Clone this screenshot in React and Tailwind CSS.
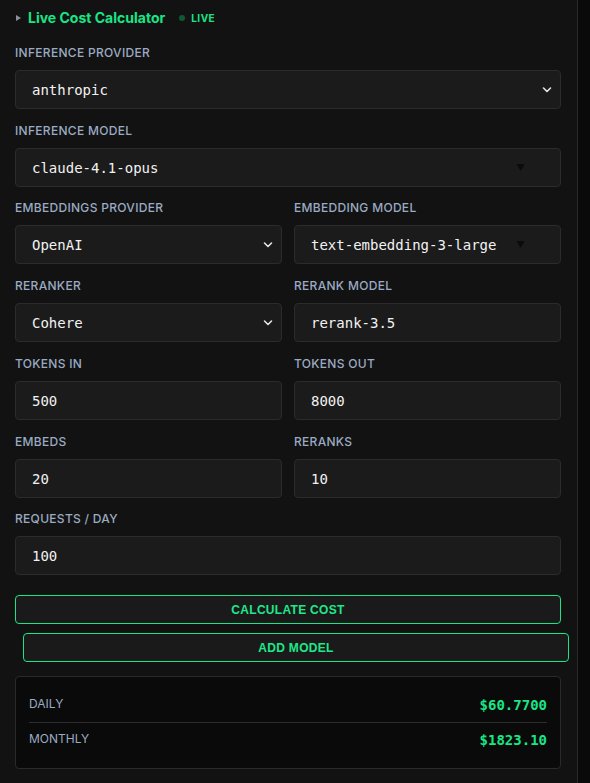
import React from 'react';

const mono = { fontFamily: '"DejaVu Sans Mono", "Liberation Mono", monospace' };

const Label = ({ children }) => (
  <div className="text-xs leading-4 font-medium tracking-wide text-[#9aabc3] uppercase mb-[9px]">
    {children}
  </div>
);

const Chevron = () => (
  <svg className="absolute right-[9px] top-1/2 -translate-y-1/2 pointer-events-none" width="10" height="7" viewBox="0 0 10 7" fill="none">
    <path d="M1.5 1.5L5 5L8.5 1.5" stroke="#e5e5e5" strokeWidth="1.6" strokeLinecap="round" strokeLinejoin="round" />
  </svg>
);

const boxCls =
  'block w-full h-[39px] rounded-[4px] border border-[#2b2b2b] bg-[#1b1b1b] px-4 text-sm text-[#f2f2f2] outline-none appearance-none';

const SelectField = ({ label, value, options }) => (
  <div>
    <Label>{label}</Label>
    <div className="relative">
      <select className={boxCls} style={mono} defaultValue={value}>
        {options.map((o) => (
          <option key={o}>{o}</option>
        ))}
      </select>
      <Chevron />
    </div>
  </div>
);

// text input with a datalist arrow
const ListField = ({ label, value }) => (
  <div>
    <Label>{label}</Label>
    <div className="relative">
      <input className={boxCls} style={mono} defaultValue={value} />
      <span className="absolute right-[36px] top-1/2 -translate-y-1/2 text-[9px] text-[#0b0b0b] pointer-events-none">▼</span>
    </div>
  </div>
);

const InputField = ({ label, value }) => (
  <div>
    <Label>{label}</Label>
    <input className={boxCls} style={mono} defaultValue={value} />
  </div>
);

export default function App() {
  return (
    <div className="min-h-screen flex bg-[#0a0a0a]" style={{ fontFamily: 'Inter, "Noto Sans", sans-serif' }}>
      <div className="w-[578px] min-h-screen border-r border-[#2a2a2a] bg-[#121212] pl-[15px] pr-4 pt-2 pb-4">
        {/* Header */}
        <div className="h-5 flex items-center mb-[17px]">
          <svg width="5" height="6" viewBox="0 0 5 6" className="ml-px mr-[7px]">
            <path d="M0 0L5 3L0 6Z" fill="#8a8f98" />
          </svg>
          <span className="text-sm font-bold text-[#19e586]">Live Cost Calculator</span>
          <span className="ml-[14px] w-[6px] h-[6px] rounded-full bg-[#0f5a35]" />
          <span className="ml-[6px] text-[10px] font-bold tracking-wider text-[#19e586]">LIVE</span>
        </div>

        <div className="flex flex-col">
          <SelectField label="Inference Provider" value="anthropic" options={['anthropic', 'openai', 'google']} />
          <div className="mt-[14px]">
            <ListField label="Inference Model" value="claude-4.1-opus" />
          </div>

          <div className="mt-[13px] grid grid-cols-2 gap-x-3 gap-y-[14px]">
            <SelectField label="Embeddings Provider" value="OpenAI" options={['OpenAI', 'Cohere', 'Voyage']} />
            <ListField label="Embedding Model" value="text-embedding-3-large" />
            <SelectField label="Reranker" value="Cohere" options={['Cohere', 'Jina', 'None']} />
            <InputField label="Rerank Model" value="rerank-3.5" />
            <InputField label="Tokens In" value="500" />
            <InputField label="Tokens Out" value="8000" />
            <InputField label="Embeds" value="20" />
            <InputField label="Reranks" value="10" />
          </div>

          <div className="mt-[13px]">
            <InputField label="Requests / Day" value="100" />
          </div>
        </div>

        <div className="mt-5" style={{ fontFamily: '"Liberation Sans", Arial, sans-serif' }}>
          <button className="block w-full h-[29px] rounded-[4px] border-[1.5px] border-[#19e586] bg-[#1a1a1a] text-xs font-bold tracking-[0.3px] text-[#1ee88a]">
            CALCULATE COST
          </button>
          <button className="block w-full ml-2 mt-[9px] h-[29px] rounded-[4px] border-[1.5px] border-[#19e586] bg-[#1a1a1a] text-xs font-bold tracking-[0.3px] text-[#1ee88a]">
            ADD MODEL
          </button>
        </div>

        <div className="mt-[14px] rounded-[4px] border border-[#2a2a2a] bg-[#0a0a0a] px-[13px] pt-[16px] pb-[18px]">
          <div className="flex items-center justify-between h-[22px] mb-[7px]">
            <span className="text-xs text-[#9aabc3]">DAILY</span>
            <span className="text-sm font-bold text-[#19e586] mt-[2px]" style={mono}>$60.7700</span>
          </div>
          <div className="border-t border-[#2e2e2e]" />
          <div className="flex items-center justify-between h-[22px] mt-[5px]">
            <span className="text-xs text-[#9aabc3]">MONTHLY</span>
            <span className="text-sm font-bold text-[#19e586] mt-[2px]" style={mono}>$1823.10</span>
          </div>
        </div>
      </div>
    </div>
  );
}
